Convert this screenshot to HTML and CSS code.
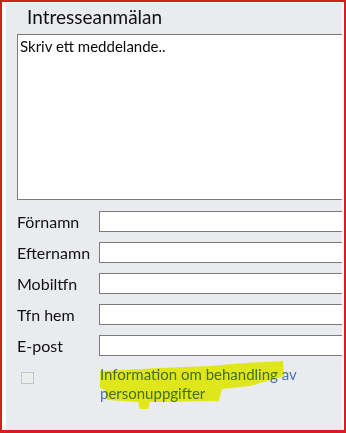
FILE: index.html
```html
<!DOCTYPE html>
<html lang="sv">
<head>
<meta charset="utf-8">
<title>Intresseanmälan</title>
<link rel="stylesheet" href="styles.css">
</head>
<body>
<div class="frame">
  <div class="panel">
    <h1 class="title">Intresseanmälan</h1>
    <textarea class="message" placeholder="Skriv ett meddelande.."></textarea>
    <div class="fields">
      <label class="lbl">Förnamn</label><input class="inp" type="text">
      <label class="lbl">Efternamn</label><input class="inp" type="text">
      <label class="lbl">Mobiltfn</label><input class="inp" type="text">
      <label class="lbl">Tfn hem</label><input class="inp" type="text">
      <label class="lbl">E-post</label><input class="inp" type="text">
    </div>
    <div class="consent">
      <span class="box"></span>
      <a class="link" href="#">Information om behandling av<br>personuppgifter</a>
    </div>
  </div>
  <svg class="highlight" width="346" height="433" viewBox="0 0 346 433" aria-hidden="true">
    <path d="M100,371 L160,368 L210,366 L245,363 L283,361 L284,376 L250,386 L222,389 L219,401 L150,402 L148,409 L140,409 L138,402 L107,400 L105,390 L100,388 Z" fill="#f6fa1e"/>
  </svg>
</div>
</body>
</html>
```

FILE: styles.css
```css
html, body {
  margin: 0;
  padding: 0;
  background: #ffffff;
}

.frame {
  position: relative;
  width: 346px;
  height: 433px;
  box-sizing: border-box;
  border: 2px solid #d3201f;
  border-bottom-width: 3px;
  padding: 1px 2px 0 4px;
  background: #fbfbfb;
  font-family: Lato, "Open Sans", sans-serif;
  color: #111111;
}

.panel {
  height: 100%;
  background: #e9ebee;
  overflow: hidden;
  padding: 2px 0 0 11px;
  box-sizing: border-box;
}

.title {
  margin: 0;
  padding-left: 10px;
  font-size: 19px;
  font-weight: normal;
  line-height: normal;
  color: #111111;
}

.message {
  display: block;
  margin: 6px 0 0 0;
  width: 340px;
  height: 166px;
  box-sizing: border-box;
  border: 1px solid #7b7b7b;
  background: #ffffff;
  padding: 3px 2px;
  font-family: Lato, "Open Sans", sans-serif;
  font-size: 15px;
  line-height: 17px;
  resize: none;
  outline: none;
}

.message::placeholder {
  color: #0a0a0a;
  opacity: 1;
}

.fields {
  display: grid;
  grid-template-columns: 82px 260px;
  row-gap: 10px;
  margin-top: 11px;
  align-items: center;
}

.lbl {
  font-size: 16px;
  line-height: 18px;
  color: #111111;
}

.inp {
  display: block;
  height: 21px;
  box-sizing: border-box;
  margin: 0;
  border: 1px solid #7b7b7b;
  background: #ffffff;
  padding: 0 3px;
  width: 260px;
}

.consent {
  display: grid;
  grid-template-columns: 82px auto;
  margin-top: 9px;
  align-items: start;
}

.box {
  display: block;
  width: 13px;
  height: 12px;
  box-sizing: border-box;
  margin: 7px 0 0 4px;
  border: 1px solid #c3c4c6;
  background: #eceded;
}

.link {
  display: block;
  padding-left: 1px;
  font-size: 15px;
  line-height: 19px;
  color: #4672b6;
  text-decoration: none;
}

.highlight {
  position: absolute;
  left: -2px;
  top: -2px;
  pointer-events: none;
  mix-blend-mode: multiply;
}
```
